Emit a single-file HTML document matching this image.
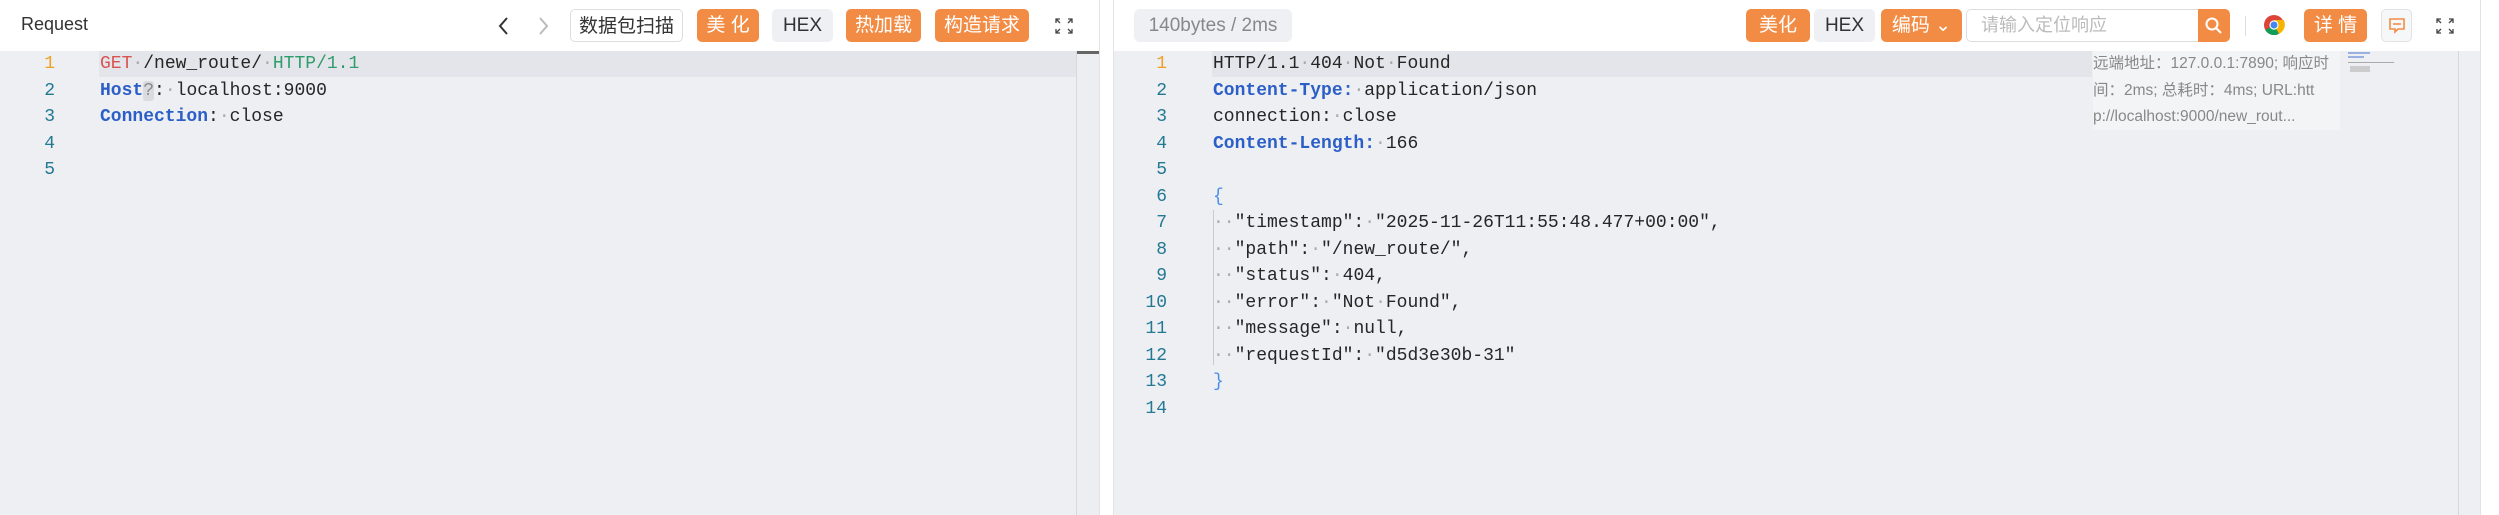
<!DOCTYPE html>
<html><head><meta charset="utf-8">
<style>
*{margin:0;padding:0;box-sizing:border-box}
body{width:2499px;height:515px;background:#fff;position:relative;overflow:hidden;font-family:"Liberation Sans","Noto Sans CJK SC",sans-serif}
.a{position:absolute}
.btn{position:absolute;top:9px;height:33px;border-radius:5px;font-size:19px;line-height:33px;text-align:center;color:#fff;background:#f28c45}
.g{background:#eef0f4;color:#333}
.panel{position:absolute;top:51px;bottom:0;background:#eeeff3}
.code{position:absolute;font-family:"Liberation Mono",monospace;font-size:18px;line-height:26.5px;white-space:pre;color:#262626}
.ln{position:absolute;font-family:"Liberation Mono",monospace;font-size:18px;line-height:26.5px;text-align:right;color:#237893;white-space:pre}
.d{color:#aaa}
.k{color:#2b5fc7;font-weight:bold}
.r{color:#d9534f}.gr{color:#2e9d6b}
.exp{position:absolute;width:20px;height:18px}
</style></head><body>
<div class="a" style="left:21px;top:14px;font-size:18px;color:#333">Request</div>
<svg class="a" style="left:497px;top:15px" width="14" height="22"><path d="M10 3 L3 11 L10 19" stroke="#333" stroke-width="2" fill="none"/></svg>
<svg class="a" style="left:536px;top:15px" width="14" height="22"><path d="M4 3 L11 11 L4 19" stroke="#bbb" stroke-width="2" fill="none"/></svg>
<div class="btn" style="left:570px;width:113px;background:#fff;color:#333;border:1px solid #ddd">数据包扫描</div>
<div class="btn" style="left:697px;width:62px">美 化</div>
<div class="btn g" style="left:772px;width:61px">HEX</div>
<div class="btn" style="left:846px;width:75px">热加载</div>
<div class="btn" style="left:935px;width:94px">构造请求</div>
<svg class="exp" style="left:1054px;top:17px" viewBox="0 0 20 18"><path d="M2 6V2H6M2 2L6 6M18 6V2H14M18 2L14 6M2 12V16H6M2 16L6 12M18 12V16H14M18 16L14 12" stroke="#444" stroke-width="1.3" fill="none"/></svg>
<div class="panel" style="left:0;width:1076px"></div>
<div class="a" style="left:99px;top:51px;width:977px;height:26px;background:#e4e5ea"></div>
<div class="a" style="left:1076px;top:51px;width:23px;bottom:0;background:#eceef2;border-left:1px solid #d6d8de"></div>
<div class="a" style="left:1077px;top:51px;width:22px;height:3px;background:#666"></div>
<div class="a" style="left:1099px;top:0;width:1px;bottom:0;background:#e3e3e3"></div>
<div class="ln" style="left:20px;top:51px;width:35px"><span style="color:#f0a020">1</span>
2
3
4
5</div>
<div class="code" style="left:100px;top:51px"><span class="r">GET</span><span class="d">·</span>/new_route/<span class="d">·</span><span class="gr">HTTP/1.1</span>
<span class="k">Host</span><span style="background:#d8dbe0;color:#888;border-radius:3px">?</span>:<span class="d">·</span>localhost:9000
<span class="k">Connection</span>:<span class="d">·</span>close</div>
<div class="a" style="left:1113px;top:0;width:1px;bottom:0;background:#e3e3e3"></div>
<div class="a" style="left:1134px;top:9px;width:158px;height:33px;background:#eef0f4;border-radius:6px;color:#888;font-size:19px;line-height:33px;text-align:center">140bytes / 2ms</div>
<div class="btn" style="left:1746px;width:64px">美化</div>
<div class="btn g" style="left:1814px;width:61px">HEX</div>
<div class="btn" style="left:1881px;width:81px">编码 ⌄</div>
<div class="a" style="left:1966px;top:9px;width:240px;height:33px;border:1px solid #ddd;border-radius:5px;background:#fff;color:#bbb;font-size:18px;line-height:31px;padding-left:14px">请输入定位响应</div>
<div class="btn" style="left:2198px;width:32px;border-radius:0 5px 5px 0"><svg width="20" height="20" style="margin-top:7px" viewBox="0 0 20 20"><circle cx="8" cy="8" r="5.5" stroke="#fff" stroke-width="2" fill="none"/><path d="M12 12L17 17" stroke="#fff" stroke-width="2"/></svg></div>
<div class="a" style="left:2245px;top:16px;width:1px;height:20px;background:#ddd"></div>
<svg class="a" style="left:2263px;top:14px" width="22" height="22" viewBox="0 0 22 22"><circle cx="11" cy="11" r="10" fill="#db4437"/><path d="M11 11 L2.3 16 A10 10 0 0 0 16 19.7 Z" fill="#0f9d58"/><path d="M11 11 L16 19.7 A10 10 0 0 0 20.7 6 L11 6Z" fill="#f4b400"/><circle cx="11" cy="11" r="4.6" fill="#fff"/><circle cx="11" cy="11" r="3.5" fill="#4285f4"/></svg>
<div class="btn" style="left:2304px;width:63px">详 情</div>
<div class="a" style="left:2381px;top:9px;width:31px;height:33px;border:1px solid #e3e3e3;border-radius:5px;background:#f6f7f9"><svg width="20" height="20" style="margin:6px 0 0 5px" viewBox="0 0 20 20"><path d="M3 3H17V13H11L8 16V13H3Z" stroke="#f28c45" stroke-width="1.6" fill="none"/><path d="M6 8H14" stroke="#f28c45" stroke-width="1.6"/></svg></div>
<svg class="exp" style="left:2435px;top:17px" viewBox="0 0 20 18"><path d="M2 6V2H6M2 2L6 6M18 6V2H14M18 2L14 6M2 12V16H6M2 16L6 12M18 12V16H14M18 16L14 12" stroke="#444" stroke-width="1.3" fill="none"/></svg>
<div class="panel" style="left:1114px;width:1366px"></div>
<div class="a" style="left:1212px;top:51px;width:880px;height:26px;background:#e4e5ea"></div>
<div class="a" style="left:2458px;top:51px;width:1px;bottom:0;background:#d6d8de"></div>
<div class="a" style="left:2480px;top:0;width:1px;bottom:0;background:#e3e3e3"></div>
<div class="ln" style="left:1125px;top:51px;width:42px"><span style="color:#f0a020">1</span>
2
3
4
5
6
7
8
9
10
11
12
13
14</div>
<div class="a" style="left:1213px;top:210px;width:1px;height:155px;background:#c8cad0"></div>
<div class="code" style="left:1213px;top:51px">HTTP/1.1<span class="d">·</span>404<span class="d">·</span>Not<span class="d">·</span>Found
<span class="k">Content-Type:</span><span class="d">·</span>application/json
connection:<span class="d">·</span>close
<span class="k">Content-Length:</span><span class="d">·</span>166

<span style="color:#4a8ee8">{</span>
<span class="d">··</span>"timestamp":<span class="d">·</span>"2025-11-26T11:55:48.477+00:00",
<span class="d">··</span>"path":<span class="d">·</span>"/new_route/",
<span class="d">··</span>"status":<span class="d">·</span>404,
<span class="d">··</span>"error":<span class="d">·</span>"Not<span class="d">·</span>Found",
<span class="d">··</span>"message":<span class="d">·</span>null,
<span class="d">··</span>"requestId":<span class="d">·</span>"d5d3e30b-31"
<span style="color:#4a8ee8">}</span>
</div>
<div class="a" style="left:2093px;top:51px;width:247px;height:79px;background:#f3f4f6;color:#888;font-size:15.5px;line-height:26.5px;overflow:hidden;white-space:nowrap">远端地址：127.0.0.1:7890; 响应时<br>间：2ms; 总耗时：4ms; URL:htt<br>p://localhost:9000/new_rout...</div>
<div class="a" style="left:2348px;top:52px;width:22px;height:2px;background:#9ab0e0"></div>
<div class="a" style="left:2348px;top:56px;width:16px;height:2px;background:#9ab0e0"></div>
<div class="a" style="left:2348px;top:62px;width:46px;height:1px;background:#aaa"></div>
<div class="a" style="left:2350px;top:66px;width:20px;height:6px;background:#ccc"></div>
</body></html>
